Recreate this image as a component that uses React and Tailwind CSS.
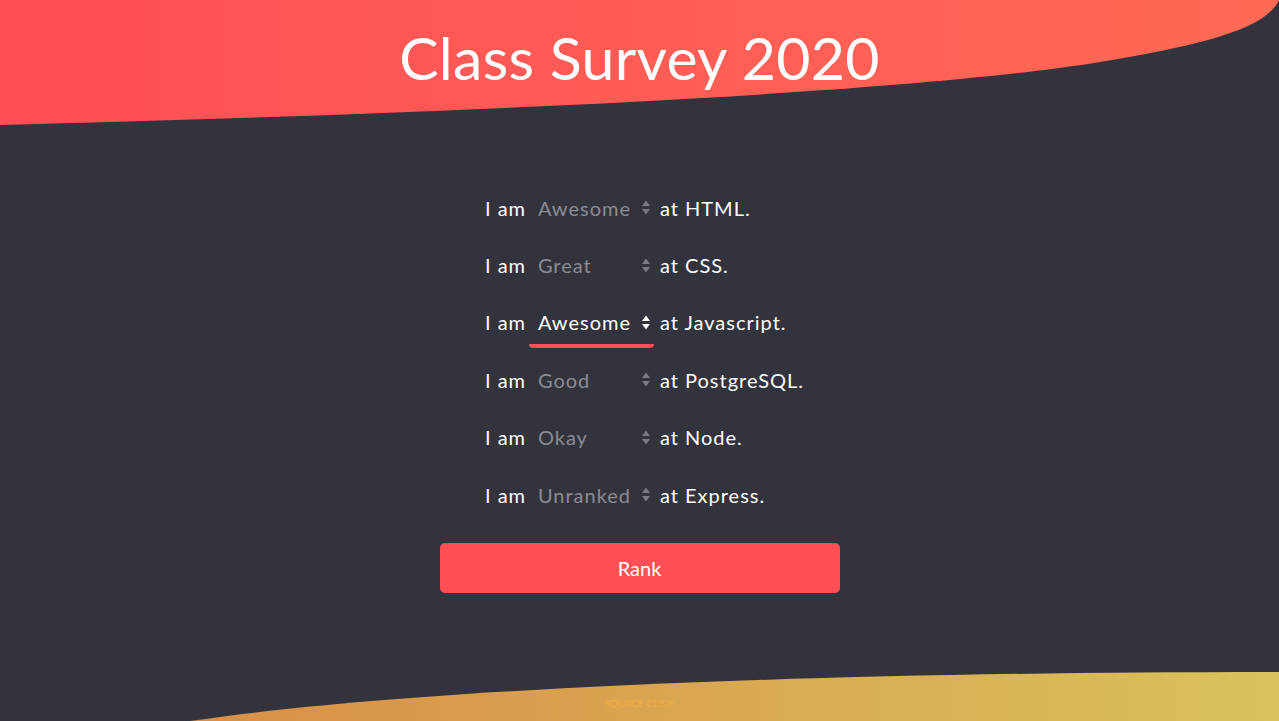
import React from "react";

const rows = [
  { v: "Awesome", s: "HTML", active: false },
  { v: "Great", s: "CSS", active: false },
  { v: "Awesome", s: "Javascript", active: true },
  { v: "Good", s: "PostgreSQL", active: false },
  { v: "Okay", s: "Node", active: false },
  { v: "Unranked", s: "Express", active: false },
];

function Arrows({ active }) {
  const c = active ? "#ffffff" : "#7a7a84";
  return (
    <svg width="10" height="17" viewBox="0 0 10 17" className="shrink-0">
      <path d="M5 1.5 L9 7 L1 7 Z" fill={c} />
      <path d="M5 15.5 L9 10 L1 10 Z" fill={c} />
    </svg>
  );
}

export default function App() {
  return (
    <div
      className="relative w-full h-[721px] overflow-hidden bg-[#33333d] text-white"
      style={{ fontFamily: "Lato, 'Noto Sans', sans-serif" }}
    >
      <svg className="absolute left-0 top-0" width="1279" height="130" viewBox="0 0 1279 130">
        <defs>
          <linearGradient id="hg" x1="0" y1="0" x2="1" y2="0">
            <stop offset="0" stopColor="#ff4e55" />
            <stop offset="1" stopColor="#ff6a55" />
          </linearGradient>
        </defs>
        <path d="M0 0 H1279 V0 C1265 30 1200 45 1100 62 C900 95 400 115 0 125 Z" fill="url(#hg)" />
      </svg>
      <svg className="absolute left-0 top-0" width="1279" height="721" viewBox="0 0 1279 721">
        <defs>
          <linearGradient id="fg" x1="0" y1="0" x2="1" y2="0">
            <stop offset="0" stopColor="#d98f48" />
            <stop offset="1" stopColor="#d9c25b" />
          </linearGradient>
        </defs>
        <path d="M190 721 C400 690 800 672 1279 672 V721 Z" fill="url(#fg)" />
      </svg>

      <div className="relative flex flex-col items-center">
        <h1 className="mt-[21px] h-[74px] text-[59px] leading-[74px] font-normal tracking-[0.3px]">
          Class Survey 2020
        </h1>

        <div className="mt-[84px] ml-[10px] flex flex-col tracking-[1px]">
          {rows.map((r, i) => (
            <div key={i} className="flex h-[57.4px] items-center text-[20px]">
              <span className="w-[44px]">I am</span>
              <div className="relative flex h-[38px] w-[125px] items-center pl-[9px] pr-[3px]">
                <span className={r.active ? "flex-1 text-white" : "flex-1 text-[#8b8b94]"}>{r.v}</span>
                <Arrows active={r.active} />
                {r.active && (
                  <div className="absolute left-0 right-0 bottom-[-7px] h-[4px] rounded-b-[4px] bg-[#ff4f57]" />
                )}
              </div>
              <span className="ml-[6px]">at {r.s}.</span>
            </div>
          ))}
        </div>

        <button className="mt-[20px] h-[50px] w-[400px] rounded-[5px] bg-[#ff4f57] text-[20px] text-white">
          Rank
        </button>
      </div>

      <div className="absolute left-0 right-0 top-[696px] text-center text-[10px] text-[#eeae3e]">
        SOURCE CODE
      </div>
    </div>
  );
}
